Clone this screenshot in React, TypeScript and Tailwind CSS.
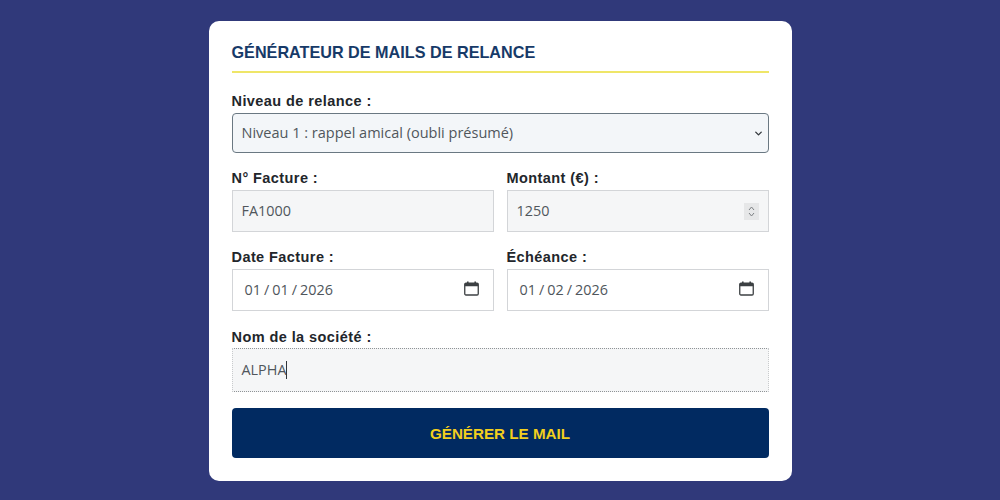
import React from "react";
import { ChevronDown } from "lucide-react";

const labelCls = "block h-[20px] text-[14.5px] leading-[20px] tracking-[0.42px] font-bold text-[#22262b] font-['Liberation_Sans',sans-serif]";
const valueCls = "font-['Open_Sans',sans-serif] text-[14.4px] text-[#50565c]";

function Calendar() {
  return (
    <svg width="15" height="15" viewBox="0 0 15 15" fill="none" className="ml-auto -mt-[3px]" aria-hidden="true">
      <rect x="0.75" y="2.25" width="13.5" height="11.75" rx="1.2" stroke="#3c4043" strokeWidth="1.3" />
      <rect x="0.75" y="2.25" width="13.5" height="3" fill="#3c4043" />
      <rect x="3" y="0.5" width="1.6" height="2.5" fill="#3c4043" />
      <rect x="10.4" y="0.5" width="1.6" height="2.5" fill="#3c4043" />
    </svg>
  );
}

function DateField({ label, d }: { label: string; d: string[] }) {
  return (
    <div className="flex flex-col gap-[2px] flex-1">
      <span className={labelCls}>{label}</span>
      <div className={`flex items-center h-[42px] pl-[12px] pr-[14px] border border-[#d3d5d8] bg-white ${valueCls}`}>
        <span>{d[0]}</span>
        <span className="mx-[3px]">/</span>
        <span>{d[1]}</span>
        <span className="mx-[3px]">/</span>
        <span>{d[2]}</span>
        <Calendar />
      </div>
    </div>
  );
}

export default function App() {
  return (
    <div className="w-[1000px] h-[500px] bg-[#30397a] flex justify-center items-start pt-[21px] overflow-hidden">
      <div className="w-[583px] h-[460px] bg-white rounded-[10px] px-[23px] pt-[21px] flex flex-col">
        <h1 className="h-[31px] border-b-2 border-[#efe668] text-[16.2px] leading-[20px] font-bold text-[#173a68] font-['Liberation_Sans',sans-serif]">
          GÉNÉRATEUR DE MAILS DE RELANCE
        </h1>
        <span className={`${labelCls} mt-[18px]`}>Niveau de relance :</span>
        <div className="mt-[2px] flex items-center h-[40px] pl-[9px] pr-[4px] rounded-[4px] border border-[#6a7882] bg-[#f3f6f9] font-['Open_Sans',sans-serif] text-[14.5px] text-[#50565c]">
          <span>Niveau 1 : rappel amical (oubli présumé)</span>
          <ChevronDown size={11} strokeWidth={3} color="#33383d" className="ml-auto" />
        </div>
        <div className="flex gap-[13px] mt-[15px]">
          <div className="flex flex-col gap-[2px] flex-1">
            <span className={labelCls}>N° Facture :</span>
            <div className={`flex items-center h-[42px] pl-[9px] border border-[#d3d5d8] bg-[#f5f6f7] ${valueCls}`}>FA1000</div>
          </div>
          <div className="flex flex-col gap-[2px] flex-1">
            <span className={labelCls}>Montant (€) :</span>
            <div className={`flex items-center h-[42px] pl-[9px] pr-[9px] border border-[#d3d5d8] bg-[#f5f6f7] ${valueCls}`}>
              <span>1250</span>
              <svg width="15" height="17" viewBox="0 0 15 17" className="ml-auto" aria-hidden="true">
                <rect width="15" height="17" fill="#e6e7e8" />
                <path d="M5 7l2.5-3L10 7M5 10l2.5 3L10 10" fill="none" stroke="#7b7f83" strokeWidth="1" />
              </svg>
            </div>
          </div>
        </div>
        <div className="flex gap-[13px] mt-[15px]">
          <DateField label="Date Facture :" d={["01", "01", "2026"]} />
          <DateField label="Échéance :" d={["01", "02", "2026"]} />
        </div>
        <span className={`${labelCls} mt-[16px]`}>Nom de la société :</span>
        <div className={`mt-[1px] flex items-center h-[44px] pl-[9px] border border-dotted border-[#8f9396] border-l-[#c9cbcd] border-r-[#c9cbcd] bg-[#f5f6f7] ${valueCls}`}>
          <span>ALPHA</span>
          <span className="w-px h-[18px] bg-[#30353a]" />
        </div>
        <button className="mt-[16px] h-[50px] pt-[3px] w-full rounded-[4px] bg-[#012a61] text-[#f2cf1d] text-[15.2px] font-bold font-['Liberation_Sans',sans-serif]">
          GÉNÉRER LE MAIL
        </button>
      </div>
    </div>
  );
}
